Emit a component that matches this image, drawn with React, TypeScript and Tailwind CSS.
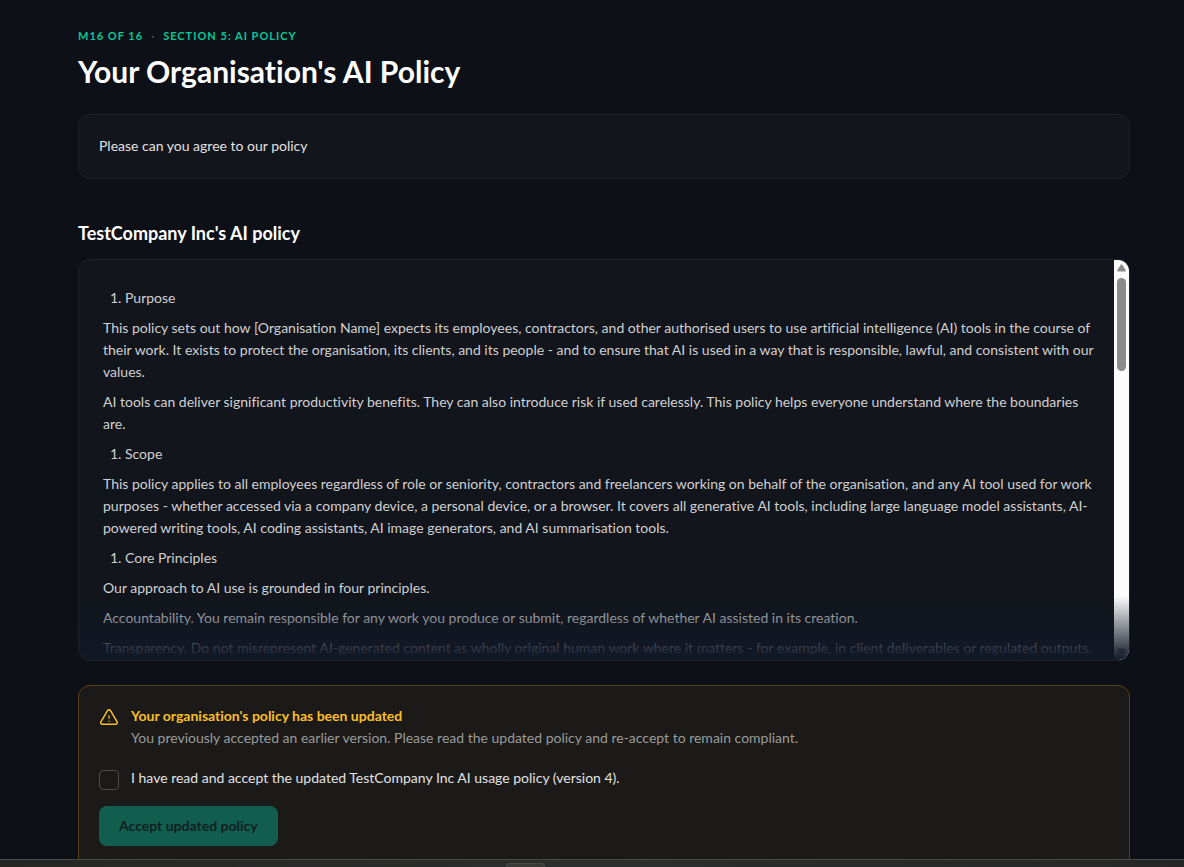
import React, { useState } from 'react';

const policy = [
  { type: 'item', text: 'Purpose' },
  {
    type: 'text',
    text: 'This policy sets out how [Organisation Name] expects its employees, contractors, and other authorised users to use artificial intelligence (AI) tools in the course of their work. It exists to protect the organisation, its clients, and its people - and to ensure that AI is used in a way that is responsible, lawful, and consistent with our values.',
  },
  {
    type: 'text',
    text: 'AI tools can deliver significant productivity benefits. They can also introduce risk if used carelessly. This policy helps everyone understand where the boundaries are.',
  },
  { type: 'item', text: 'Scope' },
  {
    type: 'text',
    text: 'This policy applies to all employees regardless of role or seniority, contractors and freelancers working on behalf of the organisation, and any AI tool used for work purposes - whether accessed via a company device, a personal device, or a browser. It covers all generative AI tools, including large language model assistants, AI-powered writing tools, AI coding assistants, AI image generators, and AI summarisation tools.',
  },
  { type: 'item', text: 'Core Principles' },
  { type: 'text', text: 'Our approach to AI use is grounded in four principles.' },
  {
    type: 'text',
    text: 'Accountability. You remain responsible for any work you produce or submit, regardless of whether AI assisted in its creation.',
  },
  {
    type: 'text',
    text: 'Transparency. Do not misrepresent AI-generated content as wholly original human work where it matters - for example, in client deliverables or regulated outputs.',
  },
];

const WarningIcon: React.FC = () => (
  <svg
    viewBox="0 0 20 20"
    className="mt-[3px] size-5 shrink-0 text-[#fbbf24]"
    fill="none"
    stroke="currentColor"
    strokeWidth="1.5"
    strokeLinecap="round"
    strokeLinejoin="round"
    aria-hidden="true"
  >
    <path d="M8.5 2.700 1.900 13.900a1.600 1.600 0 0 0 1.400 2.400h13.400a1.600 1.600 0 0 0 1.400-2.400L11.500 2.700a1.700 1.700 0 0 0-3 0Z" />
    <path d="M10 7.500v3M10 13v.3" strokeWidth="1.200" />
  </svg>
);

const ScrollTrack: React.FC = () => (
  <div className="flex w-[15px] shrink-0 flex-col items-center justify-between bg-[#fcfcfc] py-1" aria-hidden="true">
    <div className="flex flex-col items-center gap-1.5">
      <svg viewBox="0 0 9 8" className="h-2 w-[9px] fill-[#8b8b8b]">
        <path d="M3.8.8a.9.9 0 0 1 1.4 0l3.5 5.3c.4.7 0 1.4-.7 1.4H1C.3 7.5-.1 6.8.3 6.1Z" />
      </svg>
      <div className="h-[93px] w-[9px] rounded-full bg-[#8b8b8b]" />
    </div>
    <svg viewBox="0 0 9 8" className="h-2 w-[9px] rotate-180 fill-[#8b8b8b]">
      <path d="M3.8.8a.9.9 0 0 1 1.4 0l3.5 5.3c.4.7 0 1.4-.7 1.4H1C.3 7.5-.1 6.8.3 6.1Z" />
    </svg>
  </div>
);

const PolicyDocument: React.FC = () => (
  <div className="relative flex h-[402px] overflow-hidden rounded-xl border border-[#1e2126] bg-[#12151b]">
    <div className="min-w-0 flex-1 overflow-y-auto pt-[27px] pr-3.5 pl-6 [scrollbar-width:none]">
      <div className="flex flex-col gap-2 text-sm leading-[22px] text-[#d0d0d1]">
        {policy.map(({ type, text }) =>
          type === 'item' ? (
            <ol key={text} className="list-decimal pl-[22px]">
              <li>{text}</li>
            </ol>
          ) : (
            <p key={text}>{text}</p>
          )
        )}
      </div>
    </div>
    <ScrollTrack />
    <div className="pointer-events-none absolute inset-x-0 bottom-0 h-16 bg-linear-to-t from-[#111827] to-[#111827]/0" />
  </div>
);

const AcceptPanel: React.FC = () => {
  const [accepted, setAccepted] = useState(false);

  return (
    <section className="mt-6 rounded-xl border border-[#5c4011] bg-[#1b1a18] px-5 pt-[19px] pb-8 text-sm">
      <div className="flex gap-3">
        <WarningIcon />
        <div className="leading-[22px]">
          <h3 className="font-bold text-[#fbbf24]">Your organisation's policy has been updated</h3>
          <p className="text-[#9a9a99]">
            You previously accepted an earlier version. Please read the updated policy and re-accept to remain compliant.
          </p>
        </div>
      </div>
      <label className="mt-[18px] flex gap-3 leading-[22px] text-[#e2e2e2]">
        <input
          type="checkbox"
          checked={accepted}
          onChange={(e) => setAccepted(e.target.checked)}
          className="mt-[3px] size-5 shrink-0 appearance-none rounded-sm border border-[#4b4b49] checked:bg-[#00c896]"
        />
        I have read and accept the updated TestCompany Inc AI usage policy (version 4).
      </label>
      <button
        type="button"
        disabled={!accepted}
        className="mt-4 h-10 rounded-lg bg-[#00c896] px-5 font-bold text-[#0d1117] disabled:bg-[#115e4f] disabled:text-[#10201f]"
      >
        Accept updated policy
      </button>
    </section>
  );
};

export default function App() {
  return (
    <div className="flex h-screen flex-col bg-[#0d1017] font-['Lato',sans-serif] text-white [font-variant-ligatures:none]">
      <main className="min-h-0 flex-1 overflow-hidden pt-7 pr-[54px] pl-[78px]">
        <div className="flex gap-2 text-[11px] leading-4 font-bold tracking-[1px] text-[#00c896] uppercase">
          <span>M16 of 16</span>
          <span className="text-[#4b4f55]">·</span>
          <span>Section 5: AI Policy</span>
        </div>
        <h1 className="mt-[7px] text-3xl leading-10 font-bold">Your Organisation's AI Policy</h1>
        <div className="mt-[23px] rounded-xl border border-[#1e2126] bg-[#12151b] px-5 pt-5 pb-[21px] text-sm leading-[22px] text-[#e2e2e2]">
          <p>Please can you agree to our policy</p>
        </div>
        <h2 className="mt-10 mb-3 text-lg leading-7 font-bold">TestCompany Inc's AI policy</h2>
        <PolicyDocument />
        <AcceptPanel />
      </main>
      <footer className="flex h-2 shrink-0 justify-center border-t border-[#4a4a48] bg-linear-to-r from-[#262624] via-[#2c2f2e] to-[#262626] pt-[3px] pr-[134px]">
        <div className="w-[39px] rounded-t-sm border border-b-0 border-[#4a4a48] bg-[#3a3a38]" />
      </footer>
    </div>
  );
}
